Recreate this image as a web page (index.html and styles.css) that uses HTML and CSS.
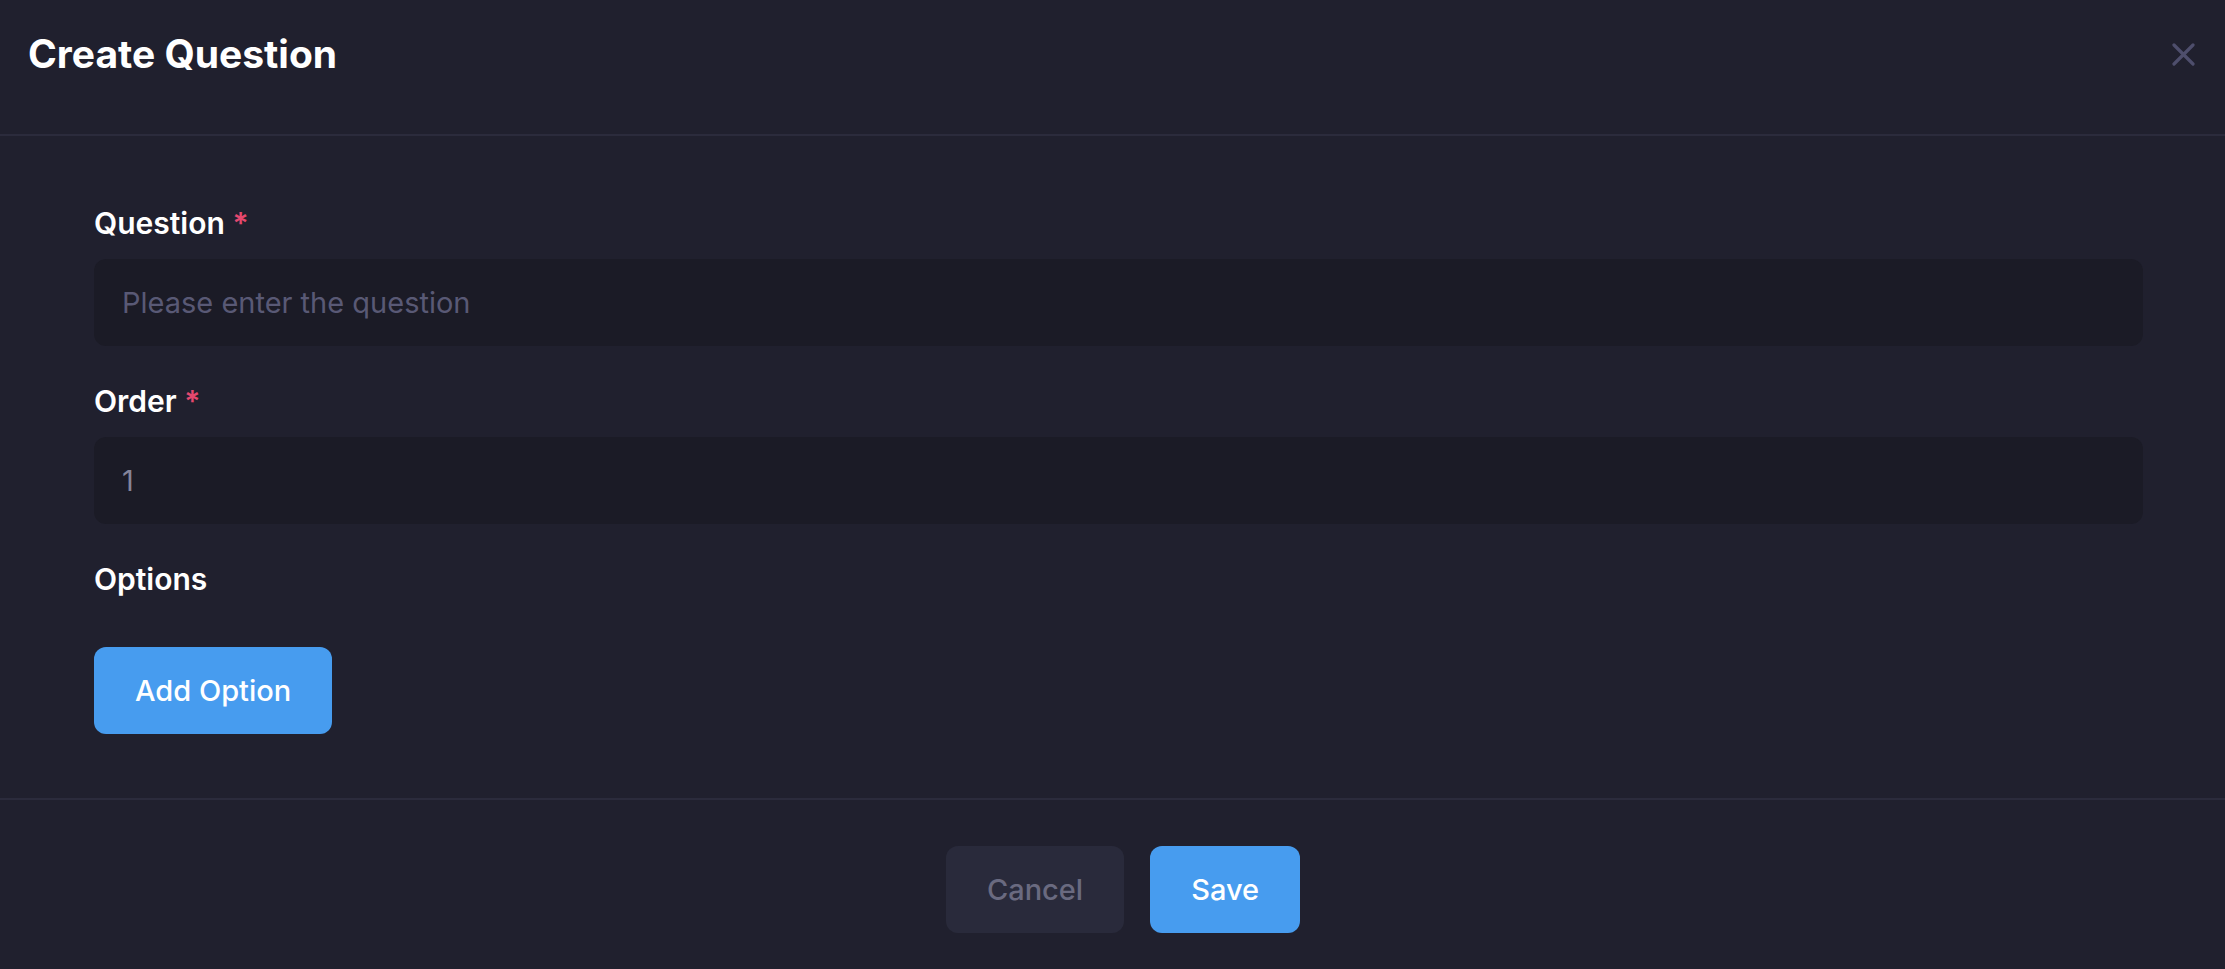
FILE: index.html
```html
<!DOCTYPE html>
<html lang="en">
<head>
<meta charset="utf-8">
<title>Create Question</title>
<link rel="stylesheet" href="styles.css">
</head>
<body>
<div class="modal">
  <header class="modal-header">
    <h1 class="modal-title">Create Question</h1>
    <button class="close-btn" aria-label="Close">
      <svg width="23" height="23" viewBox="0 0 23 23"><path d="M2 2 L21 21 M21 2 L2 21" stroke="#4e4e6c" stroke-width="3.2" stroke-linecap="round"/></svg>
    </button>
  </header>
  <main class="modal-body">
    <div class="field">
      <label class="field-label">Question <span class="req">*</span></label>
      <div class="input placeholder">Please enter the question</div>
    </div>
    <div class="field">
      <label class="field-label">Order <span class="req">*</span></label>
      <div class="input value">1</div>
    </div>
    <div class="options">
      <div class="field-label">Options</div>
      <button class="btn btn-primary add-btn">Add Option</button>
    </div>
  </main>
  <footer class="modal-footer">
    <button class="btn btn-secondary">Cancel</button>
    <button class="btn btn-primary">Save</button>
  </footer>
</div>
</body>
</html>
```
FILE: styles.css
```css
html, body {
  margin: 0;
  padding: 0;
  background: #20202e;
}
body {
  font-family: Inter, "Noto Sans", sans-serif;
  color: #ffffff;
  width: 2225px;
  height: 969px;
  overflow: hidden;
}
.modal {
  display: flex;
  flex-direction: column;
  height: 969px;
}
.modal-header {
  display: flex;
  justify-content: space-between;
  align-items: flex-start;
  padding: 31px 30px 57px 28px;
  border-bottom: 2px solid #2b2b3c;
}
.modal-title {
  margin: 0;
  font-size: 39px;
  line-height: 46px;
  font-weight: 700;
}
.close-btn {
  background: none;
  border: none;
  padding: 0;
  margin-top: 12px;
  width: 23px;
  height: 23px;
  display: flex;
}
.modal-body {
  padding: 69px 82px 0 94px;
  height: 664px;
  box-sizing: border-box;
  border-bottom: 2px solid #2b2b3c;
}
.field {
  display: flex;
  flex-direction: column;
  margin-bottom: 37px;
}
.field-label {
  font-size: 30px;
  line-height: 36px;
  font-weight: 600;
  color: #ffffff;
}
.req {
  color: #e5486e;
}
.input {
  margin-top: 18px;
  height: 87px;
  border-radius: 12px;
  background: #1b1b26;
  display: flex;
  align-items: center;
  padding: 0 28px;
  font-size: 29px;
}
.placeholder { color: #595975; }
.value { color: #85859a; }
.options {
  display: flex;
  flex-direction: column;
  align-items: flex-start;
}
.add-btn {
  margin-top: 50px;
}
.btn {
  font-family: Inter, "Noto Sans", sans-serif;
  height: 87px;
  padding: 0 41px;
  border: none;
  border-radius: 12px;
  font-size: 29px;
  font-weight: 500;
}
.btn-primary {
  background: #479cef;
  color: #ffffff;
}
.btn-secondary {
  background: #292a3b;
  color: #6a6a80;
}
.modal-footer {
  display: flex;
  justify-content: center;
  gap: 26px;
  padding: 46px 0 0 21px;
}
```
